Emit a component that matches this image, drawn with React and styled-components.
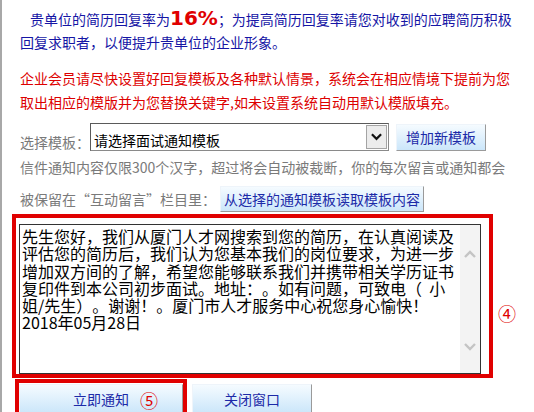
import React from "react";
import styled, { createGlobalStyle } from "styled-components";

const GlobalStyle = createGlobalStyle`
  body {
    margin: 0;
    background: #fff;
    font-family: "Noto Sans CJK SC", "Liberation Sans", sans-serif;
    text-spacing-trim: space-all;
  }
`;

const Page = styled.div`
  box-sizing: border-box;
  min-height: 412px;
  padding: 8px 0 0 10px;
  border-left: 2px solid #a8a8a8;
  overflow: hidden;
`;

const Intro = styled.p`
  margin: 0;
  padding-left: 8px;
  color: #1515a5;
  font-size: 14px;
  line-height: 23px;
  text-indent: 10px;
  white-space: nowrap;
`;

const Rate = styled.b`
  color: #e00000;
  font-family: "DejaVu Sans", sans-serif;
  font-size: 20px;
  line-height: 1;
`;

const Notice = styled.p`
  margin: 12px 0 0;
  padding-left: 8px;
  color: #dd0000;
  font-size: 14px;
  line-height: 24px;
  white-space: nowrap;
`;

const SelectRow = styled.div`
  display: flex;
  align-items: center;
  margin-top: 9px;
  padding-left: 8px;
  height: 28px;
`;

const Label = styled.span`
  color: #7a7a7a;
  font-size: 14px;
  line-height: 24px;
  padding-top: ${(p) => p.$drop || 0}px;
  white-space: nowrap;
`;

const SelectBox = styled.div`
  box-sizing: border-box;
  display: flex;
  align-items: center;
  width: 299px;
  height: 28px;
  border: 1px solid #8a8a8a;
  border-top-color: #5a5a5a;
  border-left-color: #5a5a5a;
  background: #fff;
`;

const SelectValue = styled.span`
  flex: 1;
  padding: 5px 0 0 3px;
  color: #000;
  font-size: 14px;
`;

const SelectArrow = styled.span`
  box-sizing: border-box;
  display: flex;
  align-items: center;
  justify-content: center;
  width: 21px;
  height: 24px;
  margin-right: 1px;
  border: 1px solid #a4a4a4;
  background: #ececec;
`;

const Button = styled.button`
  box-sizing: border-box;
  position: relative;
  width: ${(p) => (p.$w ? `${p.$w}px` : "auto")};
  height: ${(p) => p.$h || 26}px;
  margin: ${(p) => p.$m || "0"};
  padding: 0 3px;
  border: 1px solid #9a9a9a;
  border-top-color: #eef4fa;
  border-left-color: #eef4fa;
  background: linear-gradient(#f5fbff, #cbe6fa);
  color: #1c2aa8;
  font-family: "Noto Sans CJK SC", sans-serif;
  font-size: 14px;
  line-height: 1;
  white-space: nowrap;
`;

const HintLine = styled.div`
  margin-top: ${(p) => p.$top}px;
  padding-left: 8px;
  color: #7a7a7a;
  font-size: 14px;
  line-height: 24px;
  white-space: nowrap;
`;

const HintRow = styled.div`
  display: flex;
  align-items: center;
  margin-top: 7px;
  padding-left: 8px;
`;

const EditorRow = styled.div`
  display: flex;
  align-items: center;
  margin-top: 2px;
`;

const Highlight = styled.div`
  box-sizing: border-box;
  width: ${(p) => p.$w}px;
  padding: ${(p) => p.$pad};
  border: 4px solid #e00000;
`;

const TextBox = styled.div`
  box-sizing: border-box;
  display: flex;
  height: 150px;
  border: 1px solid #333;
  background: #fff;
`;

const TextContent = styled.div`
  flex: 1;
  padding: 3px 0 0 2px;
  color: #000;
  font-size: 16px;
  line-height: 17.3px;
  white-space: pre;
  overflow: hidden;
`;

const ScrollTrack = styled.div`
  display: flex;
  flex-direction: column;
  justify-content: space-between;
  align-items: center;
  width: 20px;
  padding: 25px 0 22px;
  background: #f3f3f3;
`;

const Mark = styled.span`
  color: #e00000;
  font-size: 18px;
  line-height: 20px;
  margin-left: ${(p) => p.$left || 0}px;
  padding-top: ${(p) => p.$drop || 0}px;
`;

const FloatMark = styled(Mark)`
  position: absolute;
  left: 120px;
  top: 5px;
`;

const ButtonRow = styled.div`
  display: flex;
  align-items: flex-start;
  margin: 1px 0 0 3px;
`;

const Chevron = ({ up, color = "#c4c4c4", width = 12 }) => (
  <svg width={width} height="8" viewBox="0 0 12 8">
    <path
      d={up ? "M1 7 L6 2 L11 7" : "M1 1 L6 6 L11 1"}
      fill="none"
      stroke={color}
      strokeWidth="2.4"
    />
  </svg>
);

const letter = `先生您好，我们从厦门人才网搜索到您的简历，在认真阅读及
评估您的简历后，我们认为您基本我们的岗位要求，为进一步
增加双方间的了解，希望您能够联系我们并携带相关学历证书
复印件到本公司初步面试。地址：。如有问题，可致电（  小
姐/先生）。谢谢！。厦门市人才服务中心祝您身心愉快！
2018年05月28日`;

export default function App() {
  return (
    <>
      <GlobalStyle />
      <Page>
        <Intro>
          贵单位的简历回复率为<Rate>16%</Rate>；为提高简历回复率请您对收到的应聘简历积极
          <br />
          回复求职者，以便提升贵单位的企业形象。
        </Intro>
        <Notice>
          企业会员请尽快设置好回复模板及各种默认情景，系统会在相应情境下提前为您
          <br />
          取出相应的模版并为您替换关键字,如未设置系统自动用默认模版填充。
        </Notice>

        <SelectRow>
          <Label $drop={10}>选择模板：</Label>
          <SelectBox>
            <SelectValue>请选择面试通知模板</SelectValue>
            <SelectArrow>
              <Chevron color="#111" width={11} />
            </SelectArrow>
          </SelectBox>
          <Button $w={90} $h={27} $m="0 0 0 7px">
            增加新模板
          </Button>
        </SelectRow>

        <HintLine $top={4}>
          信件通知内容仅限300个汉字，超过将会自动被裁断，你的每次留言或通知都会
        </HintLine>
        <HintRow>
          <Label>被保留在“互动留言”栏目里：</Label>
          <Button $h={26} $m="0 0 0 4px">
            从选择的通知模板读取模板内容
          </Button>
        </HintRow>

        <EditorRow>
          <Highlight $w={481} $pad="6px 8px 0 3px">
            <TextBox>
              <TextContent>{letter}</TextContent>
              <ScrollTrack>
                <Chevron up />
                <Chevron />
              </ScrollTrack>
            </TextBox>
          </Highlight>
          <Mark $left={5} $drop={34}>
            ④
          </Mark>
        </EditorRow>

        <ButtonRow>
          <Highlight $w={172} $pad="1px 0 0">
            <Button $w={164} $h={30}>
              立即通知
              <FloatMark>⑤</FloatMark>
            </Button>
          </Highlight>
          <Button $w={120} $h={30} $m="5px 0 0 5px">
            关闭窗口
          </Button>
        </ButtonRow>
      </Page>
    </>
  );
}
